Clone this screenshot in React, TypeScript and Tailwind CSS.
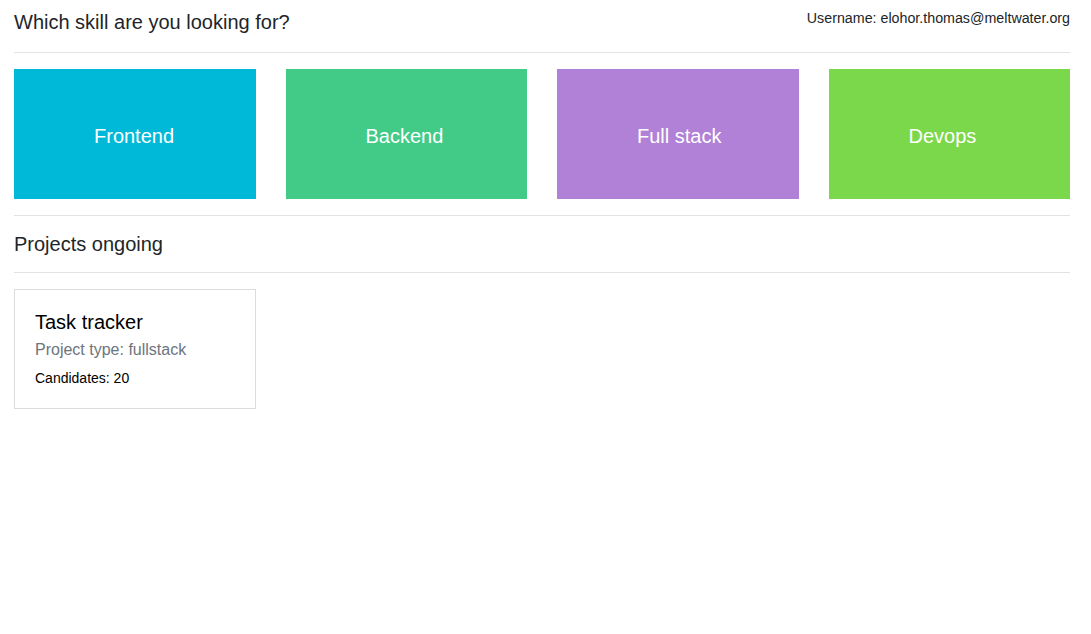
import React from 'react';

type Skill = {
  label: string;
  color: string;
};

const skills: Skill[] = [
  { label: 'Frontend', color: 'bg-[#00b9d9]' },
  { label: 'Backend', color: 'bg-[#41cb87]' },
  { label: 'Full stack', color: 'bg-[#b081d6]' },
  { label: 'Devops', color: 'bg-[#7bd84a]' },
];

type Project = {
  name: string;
  type: string;
  candidates: number;
};

const projects: Project[] = [{ name: 'Task tracker', type: 'fullstack', candidates: 20 }];

const App: React.FC = () => {
  return (
    <div className="min-h-screen bg-white pl-[14px] pr-[21px] text-[#212529] font-['Liberation_Sans',Arial,sans-serif]">
      <div className="flex h-[52px] items-start justify-between pt-[8px]">
        <h1 className="mt-[2px] text-[20px] leading-[24px]">Which skill are you looking for?</h1>
        <p className="text-[14.25px] leading-[21px]">Username: elohor.thomas@meltwater.org</p>
      </div>
      <hr className="border-t border-[#e0e2e5]" />

      <div className="mt-4 grid grid-cols-4 gap-[30px]">
        {skills.map(skill => (
          <div
            key={skill.label}
            className={`flex h-[130px] cursor-pointer items-center pl-[80px] pt-[3px] text-[20px] leading-[24px] text-white ${skill.color}`}
          >
            {skill.label}
          </div>
        ))}
      </div>

      <hr className="mt-4 border-t border-[#e0e2e5]" />
      <h2 className="py-4 text-[20px] leading-[24px]">Projects ongoing</h2>
      <hr className="border-t border-[#e0e2e5]" />

      <div className="mt-4 grid grid-cols-4 gap-[30px]">
        {projects.map(project => (
          <div key={project.name} className="border border-[#dcdcdc] px-5 pt-5 pb-[19px]">
            <p className="text-[20px] leading-[24px] text-black">{project.name}</p>
            <p className="mt-[4px] text-[16px] leading-[24px] text-[#6c757d]">Project type: {project.type}</p>
            <p className="mt-[6px] text-[14px] leading-[21px] text-black">Candidates: {project.candidates}</p>
          </div>
        ))}
      </div>
    </div>
  );
};

export default App;
